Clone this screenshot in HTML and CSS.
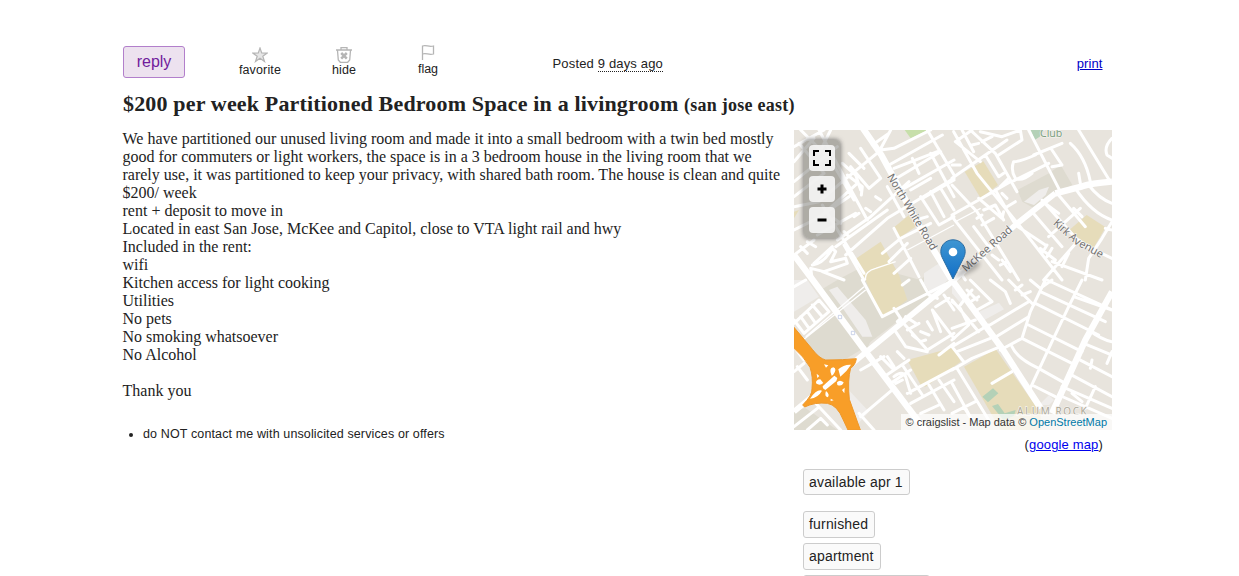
FILE: index.html
```html
<!DOCTYPE html>
<html lang="en">
<head>
<meta charset="utf-8">
<title>$200 per week Partitioned Bedroom Space in a livingroom</title>
<link rel="stylesheet" href="styles.css">
</head>
<body>
<main class="page">
  <header class="actions">
    <button class="reply">reply</button>
    <a class="action favorite"><svg width="16" height="16" viewBox="0 0 16 16"><path d="M8 1l1.700 5 5.500.1-4.400 3.200 1.700 5.200L8 11.300l-4.500 3.200 1.700-5.200L.8 6.100l5.500-.1z"/></svg><span>favorite</span></a>
    <a class="action hide"><svg width="18" height="18" viewBox="0 0 18 18"><path d="M1 4h16M6 3.500V1.700h6v1.800M2.500 4.500l.8 9.500 2 2.300h7.400l2-2.300.8-9.500"/><path class="cross" d="M6.200 7l5.600 5.600M11.800 7l-5.600 5.600"/></svg><span>hide</span></a>
    <a class="action flag"><svg width="16" height="17" viewBox="0 0 16 17"><path d="M2.500 16V2c4-1.500 6 1.500 11 0v8c-5 1.500-7-1.500-11 0"/></svg><span>flag</span></a>
    <p class="posted">Posted <time>9 days ago</time></p>
    <a class="print" href="#">print</a>
  </header>
  <h1 class="title"><span class="headline">$200 per week Partitioned Bedroom Space in a livingroom</span> <small>(san jose east)</small></h1>
  <div class="columns">
    <section class="body">
      <p class="text">We have partitioned our unused living room and made it into a small bedroom with a twin bed mostly<br>good for commuters or light workers, the space is in a 3 bedroom house in the living room that we<br>rarely use, it was partitioned to keep your privacy, with shared bath room. The house is clean and quite<br>$200/ week<br>rent + deposit to move in<br>Located in east San Jose, McKee and Capitol, close to VTA light rail and hwy<br>Included in the rent:<br>wifi<br>Kitchen access for light cooking<br>Utilities<br>No pets<br>No smoking whatsoever<br>No Alcohol<br><br>Thank you</p>
      <ul class="notices"><li>do NOT contact me with unsolicited services or offers</li></ul>
    </section>
    <aside class="side">
      <div class="map">
        <svg class="tiles" width="318" height="300" viewBox="0 0 954 900">
          <rect class="land" width="954" height="900"/>
          <g class="shade">
            <path d="M130 450L215 405 380 450 450 385 474 450 210 650 160 590 80 480z"/>
            <path d="M170 450L205 450 262 560 220 655 90 480z"/>
            <path d="M30 625L120 555 200 660 150 690 80 690 0 595z"/>
            <path d="M0 840L35 835 130 900 0 900z"/>
            <path d="M670 180L765 130 800 105 835 165 780 195 720 235 685 215z"/>
          </g>
          <g class="pale">
            <path d="M0 450H40L75 500 0 545zM390 430L435 400 474 440 440 470 415 500 390 460z"/>
            <path d="M105 480L130 470 215 570 235 620 205 620 150 540z"/>
            <path d="M155 770L225 845 175 900 195 890zM555 545L615 518 630 538 567 572zM474 450L510 510 500 520 474 490zM735 825L765 795 780 810 765 825z"/>
            <path d="M690 215L735 180 765 170 755 195 720 225z"/>
          </g>
          <g class="school">
            <path d="M300 292L345 255 365 290 315 325z"/>
            <path d="M180 390L260 335 315 435 340 510 265 565 215 450z"/>
            <path d="M512 125L568 94 612 165 560 205z"/>
            <path d="M826 300L878 255 935 292 895 360z"/>
            <path d="M340 690L480 652 500 695 395 770 380 765z"/>
            <path d="M510 710L605 657 740 850 740 900 620 900z"/>
            <path d="M0 245L15 240 0 265z"/>
          </g>
          <path class="park" d="M332 0H402L350 25z"/>
          <path class="pitch" d="M710 0H750L737 20 722 30zM565 800L597 775 613 790 582 817zM594 828L612 822 632 850 665 840 660 858 628 870z"/>
          <g class="thin">
            <path d="M0 50L90 0M0 155L130 50M20 0L110 90 180 210M75 0L155 150 220 270M0 95L60 25M15 40L90 130 0 200M110 0L75 70M0 230L75 215 145 155 255 65M90 250L190 160M130 330L230 260 345 155M60 330L0 375M145 100L185 135 200 180M200 55L260 145 225 175 170 110M165 70L210 115M160 135L205 170 202 195M155 375L280 265 480 145M125 350L280 240M85 225L210 430M150 345L210 450M20 350L40 370M40 335L65 350M0 300L70 265 165 200M70 315L185 250M215 235L230 245M245 200L260 210M180 260L195 250M120 265L140 280M150 305L165 320"/>
            <path d="M55 405Q90 400 115 355L125 365 110 395 155 385 160 400 90 425 50 415L55 450M85 425L150 450M60 400L115 350"/>
            <path d="M255 65L290 0M235 45L285 10M260 60L300 55 410 0M285 105L445 15M300 115L430 65M290 155L440 65M330 175L480 90M350 180L410 145M400 0L480 135M410 70L480 200M355 85L375 130M380 200L435 285 480 260M385 205L480 150M410 185L450 260M440 175L480 240M300 295L375 440M265 370L320 325 410 280M285 395L340 340M300 430L350 385M280 170L330 260M365 270L400 260"/>
          </g>
          <path class="track" d="M340 360L480 285M215 450Q210 425 245 415L305 395M15 640L215 480M488 273L560 235M35 620L210 470"/>
          <g class="thin" transform="translate(474 0)">
            <path d="M5 5L75 130 205 290 330 450M0 145L100 75 165 30M10 35L60 0M10 35L85 95M30 0L65 65M60 45L80 40M55 0L130 70 195 185M85 5L150 20 205 0 210 30 140 75M0 255L80 210 175 155M100 75L140 140 155 130M90 35L120 20M0 105L25 105M0 165L75 245 200 450M80 205L150 265 155 245M130 180L185 275M145 170L170 145M95 240L130 225 155 270M90 285L125 265M165 205L150 190M190 215L165 230M230 0L325 185M180 155L290 100M250 75Q205 95 185 95Q175 120 190 145Q210 155 240 130M245 75L330 40M300 60L330 105 300 110M355 40Q400 80 415 155M380 130L385 160M380 0L475 155M480 25Q455 50 465 75L480 85M315 190L400 290M370 175Q420 250 480 270M410 165Q440 205 480 220M270 210L385 340 480 385M240 245L330 350M190 285L280 345M280 220L320 250M290 320L385 235M365 235L390 260M480 275L450 325 410 385 400 450M275 450L380 330 415 355M460 295L480 300M300 395L450 450M350 370L330 410M265 355L310 390M270 370L285 345M285 380L300 355M0 260L150 450M65 290L110 350M75 265L90 255M120 375L140 390M150 390L175 425M145 405L165 395M0 390L40 450"/>
          </g>
          <g class="thin" transform="translate(0 450)">
            <path d="M0 130L75 60 105 95 30 160 0 120M20 110L45 145M40 95L65 130M55 75L85 110M0 20L35 0M205 0L265 110 480 0M300 85L320 115 310 125M325 15L345 0M335 110L365 130M340 150L375 130M305 155L335 200 400 215M320 120L400 210 480 160M355 165L380 185 395 180M380 155L405 165M380 0L405 45 430 55M400 40L480 0M450 45L480 90M415 90L480 175M425 80L465 55M415 90L440 155M435 225L480 190M400 125L415 150M200 270L270 230M260 230L300 270M280 230L300 260M310 215L330 235M270 290L345 240M290 310L350 270M325 255L385 345M300 290Q325 270 335 290L350 340M305 310L325 300M200 410L300 325M340 340L480 265M350 370L480 300M380 400L435 375M435 300L480 365M405 315L450 390M195 400L240 450M65 370L140 450M10 260L40 300M0 275L30 250M15 205L35 240M0 440L70 385M40 450L80 415 100 435M0 200L30 240"/>
          </g>
          <g class="thin" transform="translate(474 450)">
            <path d="M0 180L50 135 25 85 0 65M0 60L80 155M0 145L70 120M35 245L0 200 110 135M15 215L115 175M0 270L60 235 145 200M25 75L60 30M45 30L75 60M55 65L80 50M105 140L230 65M125 175L230 110M55 0L120 65 75 90M115 0L160 35 175 70M170 0L245 75M190 30L210 15M210 45L235 35M235 0L265 25 300 0M280 0L235 95 210 175 145 210M285 0L480 90M265 35L460 125M250 70L440 165M230 135L390 215M210 175L360 250M180 200Q195 235 260 265L340 310M390 0L350 80 300 185 230 335M365 50L480 90M410 150Q450 180 480 185M395 190L480 225M375 235L480 290M420 240L415 265M480 215L465 250M350 280L480 350M330 320L480 385M240 315L310 350M320 345L480 415M430 320L400 385M360 340L390 365M120 310L180 275M15 265L110 420M0 310L60 420M0 400L70 365M35 380L60 420"/>
          </g>
          <g class="main">
            <path class="mid" d="M784 190L664 285 474 455 200 680 0 845"/>
            <path d="M200 -15L262 75 300 145 385 305 474 450 624 655 740 835M954 155Q890 160 865 169L784 190M0 375L60 455 215 665 370 870 400 910M954 485L874 630 774 850"/>
          </g>
          <path class="freeway" d="M0 592L55 658Q75 685 95 690Q150 690 187 686Q184 706 170 714Q160 750 166 808L199 900H162L148 870Q130 825 100 820Q62 816 32 831L26 825Q56 795 54 776Q58 740 48 712Q30 680 0 655z"/>
          <g class="gaps"><path d="M133 718Q148 703 171 704Q159 724 139 740zM48 806Q69 776 84 782Q72 804 48 806zM86 769L121 737 130 744 127 753 94 780 87 775zM113 737Q103 714 118 712Q131 717 117 735zM129 757Q137 748 149 757Q144 771 130 765zM66 760Q65 749 79 748L88 759Q77 769 66 760zM96 783Q109 794 101 802Q90 799 96 783zM90 703L103 706 96 713zM68 731L76 738 70 744zM144 780L152 773 151 790zM110 806L119 811 110 813z"/></g>
          <g class="stops"><path d="M133 556h10v10h-10zM172 604h10v10h-10z"/></g>
          <g class="labels">
            <text transform="translate(278 140) rotate(59)" textLength="260" lengthAdjust="spacingAndGlyphs">North White Road</text>
            <text transform="translate(516 427) rotate(-41.500)" textLength="188" lengthAdjust="spacingAndGlyphs">McKee Road</text>
            <text transform="translate(776 282) rotate(42)" textLength="82" lengthAdjust="spacingAndGlyphs">Kirk A</text>
            <text transform="translate(838 340) rotate(28)" textLength="94" lengthAdjust="spacingAndGlyphs">venue</text>
            <text class="club" x="738" y="20" textLength="67" lengthAdjust="spacingAndGlyphs">Club</text>
            <text class="district" x="669" y="854" textLength="209">ALUM ROCK</text>
          </g>
        </svg>
        <svg class="pin" width="48" height="42" viewBox="0 0 48 42">
          <defs><linearGradient id="blue" x2="0" y2="1"><stop stop-color="#3f96d2"/><stop offset="1" stop-color="#126fc6"/></linearGradient><filter id="soft"><feGaussianBlur stdDeviation="2"/></filter></defs>
          <path d="M13 40L24 26Q37 18 40 25Q37 33 13 40z" opacity=".25" filter="url(#soft)"/>
          <path fill="url(#blue)" stroke="#2b6da3" d="M13 .8C6 .8.8 6 .8 12.500c0 3 1 5.300 2.500 8.200L13 40l9.700-19.300c1.500-2.900 2.500-5.200 2.500-8.200C25.200 6 20 .8 13 .8z"/>
          <circle cx="13" cy="13" r="4.300" fill="#fff"/>
        </svg>
        <div class="controls">
          <button><svg width="20" height="18" viewBox="0 0 20 18"><path d="M2 7V2h5M13 2h5v5M18 11v5h-5M7 16H2v-5"/></svg></button>
          <button><svg width="10" height="10" viewBox="0 0 10 10"><path class="bold" d="M5 .5v9M.5 5h9"/></svg></button>
          <button><svg width="10" height="10" viewBox="0 0 10 10"><path class="bold" d="M.5 5h9"/></svg></button>
        </div>
        <div class="credit">© craigslist - Map data © <a>OpenStreetMap</a></div>
      </div>
      <p class="google">(<a href="#">google map</a>)</p>
      <div class="attrs"><span class="first">available apr 1</span><span>furnished</span><span>apartment</span><span class="cut"></span></div>
    </aside>
  </div>
</main>
</body>
</html>
```
FILE: styles.css
```css
* { box-sizing: border-box; }
html, body { margin: 0; height: 576px; overflow: hidden; }
body { background: #fff; color: #222; font: 13px/16px "Liberation Sans", Arial, sans-serif; }
p, h1, ul { margin: 0; }
.page { width: 989px; margin-left: 123px; padding-top: 44px; }
.actions { display: flex; height: 48px; }
.reply { width: 62px; height: 32px; margin-top: 2px; padding: 0; border: 1px solid #b27fcb; border-radius: 3px; background: #ede2ef; color: #711b9c; font: 16px "Liberation Sans", Arial, sans-serif; }
.action { display: flex; flex-direction: column; align-items: center; font-size: 12.500px; line-height: 15px; }
.action svg { flex: none; fill: none; stroke: #b5b5b5; stroke-width: 1.3; }
.favorite { width: 46px; margin-left: 52px; padding-top: 3px; letter-spacing: .15px; }
.favorite svg { fill: #e6e6e6; stroke-width: 1.2; }
.hide { width: 28px; margin-left: 47px; padding-top: 2px; letter-spacing: .15px; }
.hide svg { margin-bottom: -1px; }
.hide .cross { stroke-width: 2.5; }
.flag { width: 24px; margin-left: 58px; }
.flag svg { margin-bottom: 1px; }
.posted { margin: 12px 0 0 112.500px; letter-spacing: .16px; }
.posted time { border-bottom: 1px dotted #222; }
.print { margin: 12px 9.500px 0 auto; color: #0000c8; letter-spacing: .1px; }
.title { height: 38px; white-space: nowrap; font: bold 22px/24px "Liberation Serif", serif; }
.headline { letter-spacing: .165px; }
.title small { font-size: 18px; letter-spacing: .25px; }
.columns { display: flex; }
.body { width: 671px; }
.text { white-space: nowrap; font: 16px/18px "Liberation Serif", serif; margin-left: -.5px; }
.notices { margin-top: 26px; padding-left: 20px; font-size: 12.500px; letter-spacing: .13px; }
.side { width: 318px; }
.map { position: relative; width: 318px; height: 300px; overflow: hidden; }
.tiles { display: block; }
.land { fill: #e8e4dd; }
.shade { fill: #dedbd0; }
.pale { fill: #efedeb; }
.school { fill: #e6dcba; }
.park { fill: #c7dfaa; }
.pitch { fill: #b4d1b7; }
.thin { fill: none; stroke: #fff; stroke-width: 9; stroke-linejoin: round; stroke-linecap: round; }
.track { fill: none; stroke: #fff; stroke-width: 4; }
.main { fill: none; stroke: #fff; stroke-width: 19; stroke-linejoin: round; }
.main .mid { stroke-width: 17; }
.freeway { fill: #f89e28; stroke: #ee982b; stroke-width: 3; }
.gaps { fill: #fff; }
.stops { fill: #fff; stroke: #b4bfe0; stroke-width: 2; }
.labels { fill: #6c6c6c; stroke: #f4f2ef; stroke-width: 4; paint-order: stroke; font: 33px "Open Sans", "Noto Sans", sans-serif; }
.labels .club { fill: #769b7b; }
.labels .district { fill: #aaa594; font-size: 30px; }
.pin { position: absolute; left: 146px; top: 109px; }
.controls { position: absolute; left: 10px; top: 10px; display: flex; flex-direction: column; gap: 5px; width: 36px; padding: 5px; border-radius: 5px; background: rgba(110,110,105,.48); box-shadow: 0 0 4px 1px rgba(80,80,80,.65); }
.controls button { display: flex; align-items: center; justify-content: center; width: 26px; height: 26px; padding: 0; border: 0; border-radius: 4px; background: rgba(248,248,248,.88); }
.controls svg { fill: none; stroke: #000; stroke-width: 2; }
.controls .bold { stroke-width: 3; }
.credit { position: absolute; right: 0; bottom: 0; height: 16px; padding: 0 5px; background: rgba(255,255,255,.72); color: #333; font-size: 11px; white-space: nowrap; }
.credit a { color: #0078a8; }
.google { margin: 7px 9px 0 0; text-align: right; letter-spacing: .15px; }
.google a { color: #00e; }
.attrs { display: flex; flex-direction: column; align-items: flex-start; gap: 5px; padding: 16px 0 0 9px; }
.attrs span { height: 27px; padding: 0 6px 0 5px; border: 1px solid #ccc; border-radius: 3px; background: #fafafa; font-size: 14px; line-height: 25px; letter-spacing: .18px; }
.attrs .first { height: 26px; margin-bottom: 11px; line-height: 24px; }
.attrs .cut { width: 127px; }
```
